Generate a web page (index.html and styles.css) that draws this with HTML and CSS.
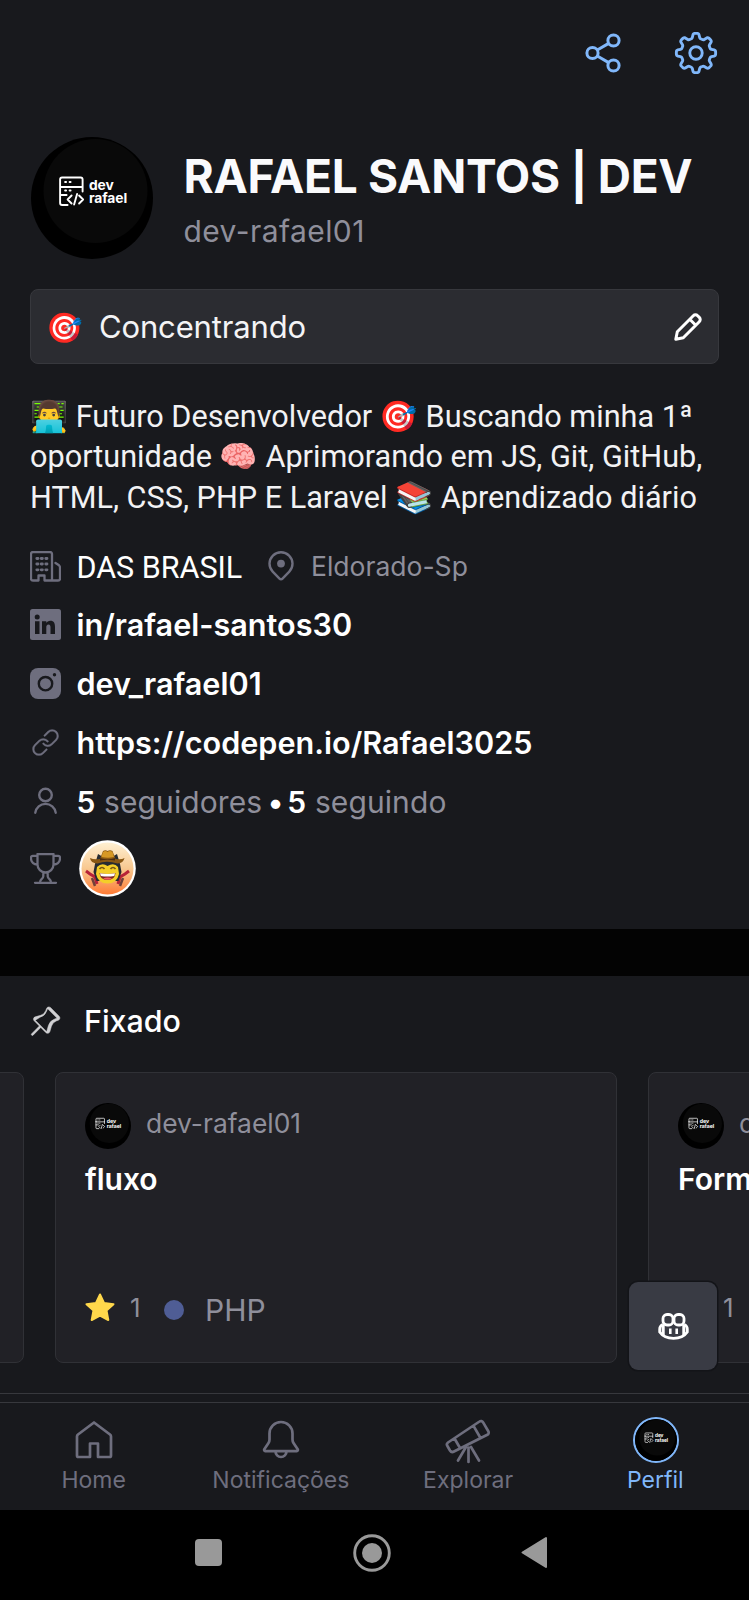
FILE: index.html
```
<!DOCTYPE html>
<html lang="pt-BR">
<head>
<meta charset="utf-8">
<title>Perfil</title>
<link rel="stylesheet" href="styles.css">
</head>
<body>
<svg class="defs" width="0" height="0">
  <symbol id="avatar" viewBox="0 0 122 122">
    <circle cx="61" cy="61" r="61" fill="#000"/>
    <circle cx="64.500" cy="54" r="52" fill="#090909"/>
    <g fill="none" stroke="#fff" stroke-width="1.900" stroke-linejoin="round" stroke-linecap="round" transform="translate(.6 -.5)">
      <path d="M28.500 50V43a2 2 0 0 1 2-2H49a2 2 0 0 1 2 2v12M28.500 50.500H51M28.500 50v16.500a2 2 0 0 0 2 2H36M28.500 58.500H35M40 59l-4 4 4 4M45.500 57.500l-3 10.500M47.500 59l4 4-4 4M33.500 45.500h1M38 45.500h1M33.500 54h1M38 54h1"/>
    </g>
    <text x="58" y="52.500" class="logo-text">dev</text>
    <text x="58" y="66" class="logo-text">rafael</text>
  </symbol>
</svg>
<div class="screen">
  <header class="toolbar">
    <svg class="ic-share" viewBox="0 0 36 40" fill="none" stroke="#80b7fa" stroke-width="3"><circle cx="7.500" cy="20" r="5.600"/><circle cx="28.500" cy="7.500" r="5.600"/><circle cx="28.500" cy="32.500" r="5.600"/><path d="M12.300 17 23.700 10.400M12.300 23 23.700 29.600"/></svg>
    <svg class="ic-gear" viewBox="0 0 24 24" fill="#80b7fa"><path d="M16 12a4 4 0 1 1-8 0 4 4 0 0 1 8 0Zm-1.500 0a2.500 2.500 0 1 0-5 0 2.500 2.500 0 0 0 5 0Z"/><path d="M12 1c.266 0 .532.009.797.028.763.055 1.345.617 1.512 1.304l.352 1.45c.019.078.09.171.225.221.247.089.49.19.728.302.13.061.246.044.315.002l1.275-.776c.603-.368 1.411-.353 1.990.147.402.349.78.726 1.128 1.129.501.578.515 1.386.147 1.990l-.776 1.274c-.042.069-.058.185.002.315.112.238.213.481.303.728.048.135.142.205.220.225l1.450.352c.687.167 1.249.749 1.303 1.512.038.531.038 1.063 0 1.594-.054.763-.616 1.345-1.303 1.512l-1.450.352c-.078.019-.171.090-.221.225-.089.248-.190.491-.302.728-.061.130-.044.246-.002.315l.776 1.275c.368.603.353 1.411-.147 1.990-.349.402-.726.780-1.129 1.128-.578.501-1.386.515-1.990.147l-1.274-.776c-.069-.042-.185-.058-.314.002a8.606 8.606 0 0 1-.729.303c-.135.048-.205.142-.225.220l-.352 1.450c-.167.687-.749 1.249-1.512 1.303-.531.038-1.063.038-1.594 0-.763-.054-1.345-.616-1.512-1.303l-.352-1.450c-.019-.078-.090-.171-.225-.221a8.138 8.138 0 0 1-.728-.302c-.130-.061-.246-.044-.315-.002l-1.275.776c-.603.368-1.411.353-1.990-.147-.402-.349-.780-.726-1.128-1.129-.501-.578-.515-1.386-.147-1.990l.776-1.274c.042-.069.058-.185-.002-.314a8.606 8.606 0 0 1-.303-.729c-.048-.135-.142-.205-.220-.225l-1.450-.352c-.687-.167-1.249-.749-1.304-1.512a11.158 11.158 0 0 1 0-1.594c.055-.763.617-1.345 1.304-1.512l1.450-.352c.078-.019.171-.090.221-.225.089-.248.190-.491.302-.728.061-.130.044-.246.002-.315l-.776-1.275c-.368-.603-.353-1.411.147-1.990.349-.402.726-.780 1.129-1.128.578-.501 1.386-.515 1.990-.147l1.274.776c.069.042.185.058.315-.002.238-.112.481-.213.728-.303.135-.048.205-.142.225-.220l.352-1.450c.167-.687.749-1.249 1.512-1.303C11.468 1.009 11.734 1 12 1Zm-.690 1.525c-.055.004-.135.050-.161.161l-.353 1.450a1.832 1.832 0 0 1-1.172 1.277 7.147 7.147 0 0 0-.600.249 1.833 1.833 0 0 1-1.734-.074l-1.274-.776c-.098-.060-.186-.036-.228 0a9.774 9.774 0 0 0-.976.976c-.036.042-.060.131 0 .228l.776 1.274c.314.529.342 1.180.074 1.734a7.147 7.147 0 0 0-.249.600 1.831 1.831 0 0 1-1.278 1.173l-1.450.351c-.110.027-.156.107-.160.162a9.630 9.630 0 0 0 0 1.380c.004.055.050.135.161.161l1.450.353a1.832 1.832 0 0 1 1.277 1.172c.074.204.157.404.249.600.268.553.240 1.204-.074 1.733l-.776 1.275c-.060.098-.036.186 0 .228.301.348.628.675.976.976.042.036.131.060.228 0l1.274-.776a1.830 1.830 0 0 1 1.734-.075c.196.093.396.176.600.250a1.831 1.831 0 0 1 1.173 1.278l.351 1.450c.027.110.107.156.162.160a9.630 9.630 0 0 0 1.380 0c.055-.004.135-.050.161-.161l.353-1.450a1.834 1.834 0 0 1 1.172-1.278 6.820 6.820 0 0 0 .600-.248 1.831 1.831 0 0 1 1.733.074l1.275.776c.098.060.186.036.228 0 .348-.301.675-.628.976-.976.036-.042.060-.131 0-.228l-.776-1.275a1.834 1.834 0 0 1-.075-1.733c.093-.196.176-.396.250-.600a1.831 1.831 0 0 1 1.278-1.173l1.450-.351c.110-.027.156-.107.160-.162a9.630 9.630 0 0 0 0-1.380c-.004-.055-.050-.135-.161-.161l-1.450-.353c-.626-.152-1.080-.625-1.278-1.172a6.576 6.576 0 0 0-.248-.600 1.833 1.833 0 0 1 .074-1.734l.776-1.274c.060-.098.036-.186 0-.228a9.774 9.774 0 0 0-.976-.976c-.042-.036-.131-.060-.228 0l-1.275.776a1.831 1.831 0 0 1-1.733.074 6.880 6.880 0 0 0-.600-.249 1.835 1.835 0 0 1-1.173-1.278l-.351-1.450c-.027-.110-.107-.156-.162-.160a9.630 9.630 0 0 0-1.380 0Z"/></svg>
  </header>

  <section class="profile">
    <div class="identity">
      <svg class="avatar-lg"><use href="#avatar"/></svg>
      <div class="names">
        <h1 class="name">RAFAEL SANTOS | DEV</h1>
        <p class="login">dev-rafael01</p>
      </div>
    </div>

    <div class="status">
      <span class="status-emoji">🎯</span>
      <span class="status-text">Concentrando</span>
      <svg class="ic-pencil" viewBox="0 0 28 28" fill="none" stroke="#fff" stroke-width="3" stroke-linejoin="round"><path d="M1.800 26.200 3.300 18.700 19.300 2.700a3 3 0 0 1 4.300 0l1.700 1.700a3 3 0 0 1 0 4.300L9.300 24.700ZM16 6.500 21.500 12"/></svg>
    </div>

    <p class="bio">👨‍💻 Futuro Desenvolvedor 🎯 Buscando minha 1ª<br>oportunidade 🧠 Aprimorando em JS, Git, GitHub,<br>HTML, CSS, PHP E Laravel 📚 Aprendizado diário</p>

    <div class="row row-org">
      <svg class="ic" viewBox="0 0 31 31" fill="none" stroke="#6e6e7e" stroke-width="2.300" stroke-linejoin="round" stroke-linecap="round"><path d="M22 29.500V3a2 2 0 0 0-2-2H3a2 2 0 0 0-2 2v24.500a2 2 0 0 0 2 2h5.500v-5h6v5H28a2 2 0 0 0 2-2V16.500a3 3 0 0 0-1-2.200L25.500 12"/><path d="M6.800 7.500h1.200M11.200 7.500h1.200M15.800 7.500H17M6.800 13h1.200M11.200 13h1.200M15.800 13H17M6.800 18.800h1.200M11.200 18.800h1.200M15.800 18.800H17" stroke-width="2.800"/></svg>
      <span class="org">DAS BRASIL</span>
      <svg class="ic-pin" viewBox="0 0 26 30" fill="none" stroke="#6e6e7e" stroke-width="2.400" stroke-linejoin="round"><path d="M4.700 20.700a11.500 11.500 0 1 1 16.600 0L14.500 27.600a2.100 2.100 0 0 1-3 0Z"/><circle cx="13" cy="12.600" r="3.900" fill="#6e6e7e" stroke="none"/></svg>
      <span class="place">Eldorado-Sp</span>
    </div>
    <div class="row">
      <svg class="ic" viewBox="0 0 31 31"><rect width="31" height="31" rx="2.500" fill="#6e6e7e"/><g fill="#18191d"><circle cx="7.200" cy="8" r="2.500"/><path d="M5 12.200h4.500V25H5ZM12 12.200h4.300v1.900c.8-1.400 2.100-2.300 4-2.300 3.800 0 4.700 2.500 4.700 6.300V25h-4.500v-6.500c0-1.600-.3-3-2-3s-2.200 1.400-2.200 3V25H12Z"/></g></svg>
      <span class="link">in/rafael-santos30</span>
    </div>
    <div class="row">
      <svg class="ic" viewBox="0 0 31 31"><rect width="31" height="31" rx="8" fill="#6e6e7e"/><circle cx="15.500" cy="15.700" r="6.700" fill="none" stroke="#18191d" stroke-width="2.400"/><circle cx="24.500" cy="6.700" r="1.700" fill="#18191d"/></svg>
      <span class="link">dev_rafael01</span>
    </div>
    <div class="row">
      <svg class="ic" viewBox="0 0 24 24" fill="#6e6e7e" stroke="#6e6e7e" stroke-width=".25"><path d="M14.780 3.653a3.936 3.936 0 1 1 5.567 5.567l-3.627 3.627a3.936 3.936 0 0 1-5.880-.353.750.750 0 0 0-1.180.928 5.436 5.436 0 0 0 8.120.486l3.628-3.628a5.436 5.436 0 1 0-7.688-7.688l-3 3a.750.750 0 0 0 1.060 1.061l3-3Z" transform="translate(1 1) scale(.92)"/><path d="M7.280 11.153a3.936 3.936 0 0 1 5.880.353.750.750 0 0 0 1.180-.928 5.436 5.436 0 0 0-8.120-.486L2.592 13.720a5.436 5.436 0 1 0 7.688 7.688l3-3a.750.750 0 1 0-1.060-1.060l-3 3a3.936 3.936 0 0 1-5.567-5.568l3.627-3.627Z" transform="translate(1 1) scale(.92)"/></svg>
      <span class="link">https://codepen.io/Rafael3025</span>
    </div>
    <div class="row">
      <svg class="ic" viewBox="0 0 31 31" fill="none" stroke="#6e6e7e" stroke-width="2.400" stroke-linecap="round"><circle cx="15.500" cy="9" r="6.300"/><path d="M5.300 26.700a10.300 10.300 0 0 1 20.400 0"/></svg>
      <span class="follow"><b>5</b> <span class="muted">seguidores</span><b class="sep"> • </b><b>5</b> <span class="muted">seguindo</span></span>
    </div>
    <div class="row row-badges">
      <svg class="ic" viewBox="0 0 31 31" fill="none" stroke="#6e6e7e" stroke-width="2.300" stroke-linecap="round" stroke-linejoin="round"><path d="M7.500 1h16v10.500a8 8 0 0 1-16 0ZM7.500 2.800H2.800A1.800 1.800 0 0 0 1 4.600V6a6 6 0 0 0 6.500 5.500M23.500 2.800h4.700A1.800 1.800 0 0 1 30 4.600V6a6 6 0 0 1-6.500 5.500M13.300 19.500v3.700c0 3-3.300 2.500-3.300 6.300M17.700 19.500v3.700c0 3 3.300 2.500 3.300 6.300M5 29.800h21"/></svg>
      <svg class="badge" viewBox="0 0 57 57">
        <defs><linearGradient id="sun" x1="0" y1="0" x2="0" y2="1"><stop offset="0" stop-color="#fff0d2"/><stop offset=".5" stop-color="#f8c890"/><stop offset="1" stop-color="#ff7b35"/></linearGradient></defs>
        <circle cx="28.500" cy="28.500" r="28.300" fill="#fff"/><circle cx="28.500" cy="28.500" r="26" fill="url(#sun)"/>
        <path d="M7 31l4 3 5 3 2 7M50 31l-4 3-5 3-2 7" fill="none" stroke="#b72238" stroke-width="3"/>
        <path d="M13 38l3 8M44 38l-3 8" stroke="#71413a" stroke-width="2.500"/>
        <path d="M16 24l3-10 5 3h9l5-3 3 10 1.500 8-3 9H17.500l-3-9Z" fill="#262b32"/>
        <path d="M18 27q5-5 10.500-1Q35 22 39 27l1 7q-2 9.500-11.500 9.500T17 34Z" fill="#f4ce28"/>
        <path d="M11 18q4 2 10 1l3-8q2.500-1.500 4.500 0 2.500-1.500 5 0l3 8q6 1 9-1-1 5-7 5.500-11-3.500-20 0-7-.500-7.500-5.500Z" fill="#8b5813"/><path d="M24 12q2.500-2 4.500 0 2.500-2 5 0l1.500 5q-6 1.500-12.500 0Z" fill="#d79825"/><path d="M21 18q8 2.500 15 0v2.500q-8-1.500-15 0Z" fill="#4d2c10"/>
        <path d="M20.500 29q2.500-3 5 0M31.500 29q2.500-3 5 0" fill="none" stroke="#795715" stroke-width="1.700"/>
        <path d="M20.500 33q8 2 16 0-.5 7-8 7t-8-7Z" fill="#7d251f"/><path d="M21 33.300q7.500 1.500 15 0l-.7 2.600q-7 1-13.500 0Z" fill="#fff"/><path d="M24 38.500q4.500-2 9 0-4 2.500-9 0Z" fill="#f45b61"/>
      </svg>
    </div>
  </section>

  <div class="divider"></div>

  <section class="pinned">
    <h2 class="pinned-head">
      <svg class="ic" viewBox="0 0 24 24" fill="#d0d0d3" stroke="#d0d0d3" stroke-width=".35"><path d="m16.114 1.553 6.333 6.333a1.750 1.750 0 0 1-.603 2.869l-1.630.633a5.670 5.670 0 0 0-3.395 3.725l-1.131 3.959a1.750 1.750 0 0 1-2.920.757L9 16.061l-5.595 5.594a.749.749 0 1 1-1.060-1.060L7.939 15l-3.768-3.768a1.750 1.750 0 0 1 .757-2.920l3.959-1.131a5.666 5.666 0 0 0 3.725-3.395l.633-1.630a1.750 1.750 0 0 1 2.869-.603ZM5.232 10.990l7.778 7.778a.250.250 0 0 0 .417-.108l1.131-3.959A7.170 7.170 0 0 1 18.852 9.990l1.630-.634a.250.250 0 0 0 .086-.409l-6.333-6.333a.250.250 0 0 0-.409.086l-.634 1.630a7.170 7.170 0 0 1-4.711 4.294L5.340 10.573a.250.250 0 0 0-.108.417Z" transform="translate(-1.200 -.400) scale(1.060)"/></svg>
      <span>Fixado</span>
    </h2>
    <div class="carousel">
      <article class="card"></article>
      <article class="card">
        <div class="owner"><svg class="avatar-sm"><use href="#avatar"/></svg><span>dev-rafael01</span></div>
        <h3 class="repo">fluxo</h3>
        <div class="meta">
          <svg class="ic-star" viewBox="0 0 30 28" fill="#ffd84b" stroke="#ffd84b" stroke-width="2" stroke-linejoin="round"><path d="m15 1.500 4 8.400 9.500 1.300-7 6.300L23.300 27 15 22.500 6.700 27l1.800-9.500-7-6.300 9.500-1.300Z"/></svg>
          <span class="count">1</span><i class="lang-dot"></i><span class="lang">PHP</span>
        </div>
      </article>
      <article class="card">
        <div class="owner"><svg class="avatar-sm"><use href="#avatar"/></svg><span>dev-rafael01</span></div>
        <h3 class="repo">Form</h3>
        <div class="meta">
          <svg class="ic-star" viewBox="0 0 30 28" fill="#ffd84b"><path d="m15 1.500 4 8.400 9.500 1.300-7 6.300L23.300 27 15 22.500 6.700 27l1.800-9.500-7-6.300 9.500-1.300Z"/></svg>
          <span class="count">1</span>
        </div>
      </article>
    </div>
    <button class="fab">
      <svg class="ic-copilot" viewBox="0 0 31 27" fill="none" stroke="#fff" stroke-width="2.800"><rect x="5" y="1.500" width="10" height="10.500" rx="4"/><rect x="16" y="1.500" width="10" height="10.500" rx="4"/><path d="M4.800 11.500Q1.700 13 1.700 16v3Q6 25.300 15.500 25.300T29.300 19v-3q0-3-3.100-4.500"/><path d="M5.200 11.500v10.500M25.800 11.500v10.500" stroke-width="3"/><path d="M12.300 15.500v5.500M18.700 15.500v5.500" stroke-width="2.600"/></svg>
    </button>
  </section>

  <nav class="tabs">
    <a class="tab"><svg class="ic-tab" viewBox="0 0 42 42"><path d="M21 3.500 5 15.500q-1 .8-1 2V36.500a1.500 1.500 0 0 0 1.500 1.500H17V24.500h8V38h11.500a1.500 1.500 0 0 0 1.500-1.500v-19q0-1.200-1-2Z"/></svg><span>Home</span></a>
    <a class="tab"><svg class="ic-tab" viewBox="0 0 42 42"><path d="M9.500 14.500a11.500 11.500 0 0 1 23 0v6q0 2 1 3.500l4.200 6.200a1.300 1.300 0 0 1-1 2H5.300a1.300 1.300 0 0 1-1-2L8.500 24q1-1.500 1-3.500ZM15.500 32.500a5.500 5.500 0 0 0 11 0"/></svg><span>Notificações</span></a>
    <a class="tab"><svg class="ic-tab ic-tele" viewBox="0 0 46 46"><path d="M3 24.500 34.500 3.500a2.500 2.500 0 0 1 3.600.8l5.200 9a2.500 2.500 0 0 1-1 3.500L9 33.500a3 3 0 0 1-4-1l-2.600-4.500a2.600 2.600 0 0 1 .6-3.500ZM9.500 20.500l5.500 9.500M28.500 7.800l7 12.200M23.500 29.500v14.500M21 29 13 42.500M26 29l8 13.500"/></svg><span>Explorar</span></a>
    <a class="tab tab-on"><svg class="avatar-tab"><use href="#avatar"/></svg><span>Perfil</span></a>
  </nav>

  <footer class="system">
    <i class="sys-square"></i>
    <svg class="sys-circle" viewBox="0 0 38 38"><circle cx="19" cy="19" r="17.300" fill="none" stroke="#999" stroke-width="2.900"/><circle cx="19" cy="19" r="10" fill="#999"/></svg>
    <svg class="sys-back" viewBox="0 0 26 33"><path d="M25 2v29L1.500 16.500Z" fill="#999" stroke="#999" stroke-width="2" stroke-linejoin="round"/></svg>
  </footer>
</div>
</body>
</html>
```
FILE: styles.css
```
* { box-sizing: border-box; margin: 0; padding: 0; }
body { background: #000; font-family: Inter, "Noto Sans", sans-serif; color: #fff; }
svg { display: block; flex: none; }
.defs { position: absolute; }
.logo-text { font: 700 13.800px Inter, sans-serif; fill: #fff; letter-spacing: -.1px; }

.screen { width: 749px; height: 1600px; overflow: hidden; background: #18191d; display: flex; flex-direction: column; white-space: nowrap; }
.toolbar { height: 105px; display: flex; justify-content: flex-end; align-items: center; gap: 54px; padding-right: 32px; }
.ic-share { width: 36px; height: 40px; }
.ic-gear { width: 46px; height: 46px; margin: 0 -1.500px 0 -2px; }

.profile { height: 824px; padding: 32px 30px 0; }
.identity { display: flex; height: 122px; gap: 31px; }
.avatar-lg { width: 122px; height: 122px; margin-left: .5px; }
.names { padding-top: 9px; }
.name { font-size: 46px; font-weight: 700; line-height: 60px; letter-spacing: -.3px; color: #fafafc; }
.login { font-size: 30px; line-height: 50px; letter-spacing: .42px; color: #8f8f9b; }

.status { margin-top: 30px; height: 75px; display: flex; align-items: center; border: 1px solid #37383d; border-radius: 8px; background: #2b2c31; padding: 0 17px; }
.status-emoji { font: 29.500px/40px Roboto, "Noto Color Emoji", sans-serif; width: 53px; margin: 2px 0 0 -2px; }
.status-text { font-size: 31px; flex: 1; letter-spacing: -.15px; color: #f4f4f6; }
.ic-pencil { width: 28px; height: 28px; margin-right: -1px; }

.bio { margin-top: 33px; font: 30.650px/40.300px Roboto, "Noto Color Emoji", sans-serif; color: #f2f2f4; height: 121px; }

.row { height: 59px; display: flex; align-items: center; }
.row .ic { width: 31px; height: 31px; margin-right: 15.500px; }
.row-org { margin-top: 20px; height: 57px; }
.org { font: 30.500px/36px Roboto, sans-serif; width: 191.500px; margin-top: 3px; }
.ic-pin { width: 26px; height: 30px; margin: -2px 17px 0 0; }
.place { font-size: 26.500px; color: #8f8f9b; line-height: 32px; margin-top: -2px; }
.link { font-size: 30.600px; font-weight: 600; margin-top: -1px; }
.follow { font-size: 30px; letter-spacing: .1px; }
.follow b { font-weight: 600; }
.sep { letter-spacing: -1.700px; }
.muted { color: #8f8f9b; }
.row-badges { height: 76px; margin-top: -1px; }
.badge { width: 57px; height: 57px; margin-left: 2px; }

.divider { height: 47px; background: #030303; }

.pinned { position: relative; height: 418px; border-bottom: 1px solid #37383d; }
.pinned-head { height: 96px; display: flex; align-items: center; gap: 23px; padding: 0 0 6px 30px; font-size: 30.400px; font-weight: 500; }
.pinned-head .ic { width: 31px; height: 31px; }
.carousel { display: flex; gap: 31px; margin-left: -538px; }
.card { flex: none; width: 562px; height: 291px; background: #212126; border: 1px solid #303136; border-radius: 8px; padding: 30px 29px 0; }
.owner { display: flex; height: 46px; gap: 15px; color: #8f8f9b; font-size: 26.400px; line-height: 41px; }
.avatar-sm { width: 46px; height: 46px; }
.repo { font-size: 30px; font-weight: 600; line-height: 60px; }
.meta { margin-top: 74px; height: 50px; display: flex; align-items: center; color: #8f8f9b; }
.ic-star { width: 30px; height: 28px; margin-top: -3px; }
.count { font-size: 26px; margin: -2px 0 0 15px; width: 34px; }
.lang-dot { width: 20px; height: 20px; border-radius: 50%; background: #4f5d95; margin: 3px 21px 0 0; }
.lang { font-size: 30px; margin-top: 3px; }
.fab { position: absolute; right: 32px; bottom: 23px; width: 88px; height: 88px; border: 0; border-radius: 9px; background: #393b44; box-shadow: 0 0 0 1.500px #131418; display: grid; place-items: center; }
.ic-copilot { width: 31px; height: 27px; }

.tabs { margin-top: 8px; height: 108px; border-top: 1px solid #37383d; display: grid; grid-template-columns: repeat(4, 1fr); }
.tab { display: flex; flex-direction: column; align-items: center; padding-top: 14px; font-size: 23px; line-height: 30px; color: #6e6e7e; }
.ic-tab { width: 42px; height: 42px; margin: 2px 0 4px; fill: none; stroke: #6e6e7e; stroke-width: 2.700; stroke-linejoin: round; stroke-linecap: round; }
.ic-tele { width: 46px; height: 46px; margin: 1px 0; }
.avatar-tab { width: 46px; height: 46px; border: 2px solid #80b7fa; border-radius: 50%; margin: 0 0 2px 1px; background: #000; }
.tab-on { color: #80b7fa; }

.system { height: 90px; background: #000; display: flex; align-items: center; padding: 0 0 5px 195px; }
.sys-square { width: 27px; height: 27px; border-radius: 4px; background: #999; }
.sys-circle { width: 38px; height: 38px; margin-left: 131px; }
.sys-back { width: 26px; height: 33px; margin-left: 130px; }
```
